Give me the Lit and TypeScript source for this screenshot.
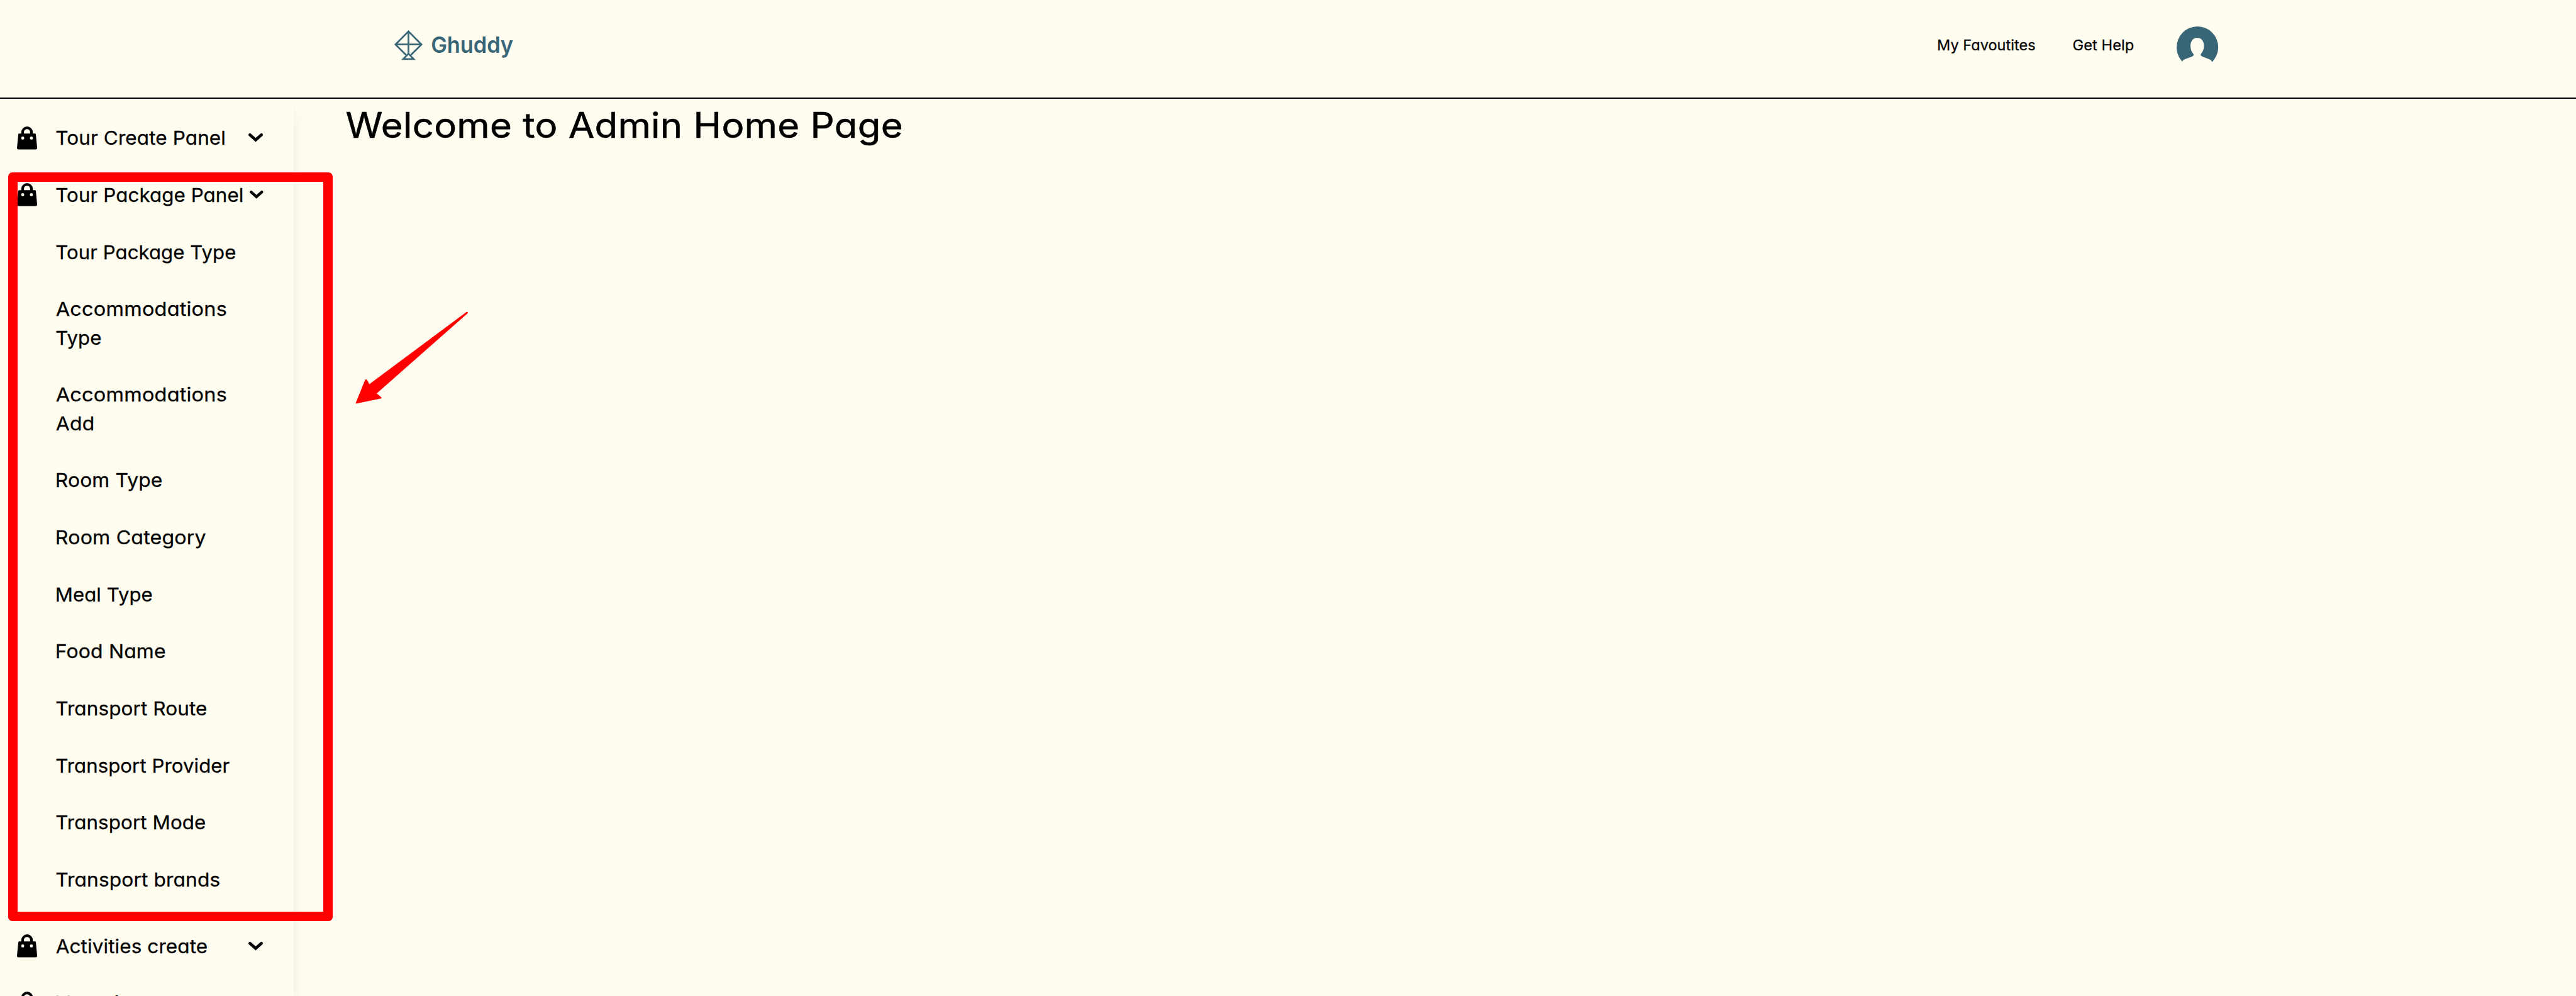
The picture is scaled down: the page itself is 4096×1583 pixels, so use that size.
import { LitElement, html, css } from "lit";
import { customElement, property } from "lit/decorators.js";

/** Width of the design canvas; every --u is one unit of it. */
const DESIGN_WIDTH = 4336;
/** Share of the missing width that goes to the glyphs; the rest is tracking. */
const STRETCH_SHARE = 0.9;

/** One line of text, widened so that its ink spans a given width in design units. */
@customElement("fit-label")
class FitLabel extends LitElement {
  @property() text = "";
  @property({ type: Number }) span = 0;

  static styles = css`
    :host { display: block; white-space: nowrap; }
    .line { display: inline-block; transform-origin: 0 50%; }
  `;

  render() {
    return html`<span class="line">${this.text}</span>`;
  }

  updated() {
    const line = this.renderRoot.querySelector(".line") as HTMLElement;
    const unit = window.innerWidth / DESIGN_WIDTH;
    const target = this.span * unit;
    const cs = getComputedStyle(line);
    const ctx = document.createElement("canvas").getContext("2d")!;
    const size = parseFloat(cs.fontSize);
    const k = size / 1000;
    ctx.font = `${cs.fontWeight} 1000px ${cs.fontFamily}`;
    const first = ctx.measureText(this.text[0]);
    const last = ctx.measureText(this.text[this.text.length - 1]);
    const left = -first.actualBoundingBoxLeft * k;
    const right = (last.width - last.actualBoundingBoxRight) * k;
    const ink = line.offsetWidth - left - right;
    const scale = 1 + (target / ink - 1) * STRETCH_SHARE;
    const spacing = (target / scale - ink) / (this.text.length - 1);
    const shift = -left * 0.5 - 1.1 * unit;
    line.style.letterSpacing = `${spacing}px`;
    line.style.transform = `translate(${shift}px, ${0.65 * unit}px) scaleX(${scale})`;
    this.style.width = `${target}px`;
  }
}

type Line = [text: string, span: number];

const packageItems: Line[][] = [
  [["Tour Package Type", 301.5]],
  [["Accommodations", 286.4], ["Type", 75]],
  [["Accommodations", 286.4], ["Add", 62.6]],
  [["Room Type", 176.8]],
  [["Room Category", 250.2]],
  [["Meal Type", 160.3]],
  [["Food Name", 182]],
  [["Transport Route", 252.5]],
  [["Transport Provider", 290.8]],
  [["Transport Mode", 250]],
  [["Transport brands", 274.3]],
];

const label = ([text, span]: Line) => html`<fit-label .text=${text} .span=${span}></fit-label>`;

const bag = () => html`<svg class="bag" viewBox="0 0 34 39">
  <path fill-rule="evenodd" d="M7.3 12V9.6a9.7 9.6 0 0 1 19.4 0V12H30.2Q31.6 12 31.8 13.4L34 36.4Q34.1 38.6 32 38.6H2Q-.1 38.6 0 36.4L2.2 13.4Q2.4 12 3.8 12ZM11.7 12H22.1V9.4a5.2 5 0 0 0-10.4 0ZM7.1 19.6a2.6 2.6 0 1 0 5.2 0a2.6 2.6 0 1 0-5.2 0ZM21.7 19.6a2.6 2.6 0 1 0 5.2 0a2.6 2.6 0 1 0-5.2 0Z" />
</svg>`;

const chevron = (tight = false) => html`<svg class="chevron ${tight ? "tight" : ""}" viewBox="0 0 24.4 14.4">
  <path d="M2.5 2.4L12.2 11L21.9 2.4" fill="none" stroke="#000" stroke-width="5" stroke-linecap="round" />
</svg>`;

@customElement("app-root")
class AppRoot extends LitElement {
  static styles = css`
    :host {
      --u: calc(100vw / 4336);
      --teal: #386677;
      position: relative;
      display: flex;
      flex-direction: column;
      height: 100vh;
      overflow: hidden;
      background: #fffdef;
      color: #000;
      font-family: Inter, "Open Sans", sans-serif;
      font-feature-settings: "cv11" 1;
      font-optical-sizing: none;
      font-weight: 400;
      font-size: calc(32 * var(--u));
      line-height: calc(48 * var(--u));
    }
    svg { display: block; flex: none; overflow: visible; }
    .header {
      flex: none;
      box-sizing: border-box;
      display: flex;
      align-items: flex-start;
      justify-content: space-between;
      height: calc(166 * var(--u));
      padding: calc(44 * var(--u)) calc(602.3 * var(--u)) 0 calc(664 * var(--u));
      border-bottom: 2px solid #000;
    }
    .brand {
      display: flex;
      gap: calc(16 * var(--u));
      padding-top: calc(7 * var(--u));
      color: var(--teal);
      font-size: calc(37.5 * var(--u));
      font-weight: 600;
    }
    .kite { width: calc(47.6 * var(--u)); height: calc(50 * var(--u)); }
    .nav {
      display: flex;
      align-items: flex-start;
      font-size: calc(23.6 * var(--u));
    }
    .nav fit-label { margin-top: calc(7 * var(--u)); }
    .favs { margin-right: calc(65 * var(--u)); }
    .help { margin-right: calc(72.6 * var(--u)); }
    .avatar { width: calc(70 * var(--u)); height: calc(70 * var(--u)); }
    .body { flex: 1; display: flex; min-height: 0; }
    .sidebar {
      flex: none;
      box-sizing: border-box;
      width: calc(494 * var(--u));
      padding-top: calc(18 * var(--u));
      box-shadow: 0 calc(20 * var(--u)) calc(30 * var(--u)) calc(-6 * var(--u)) rgba(0, 0, 0, 0.1),
        0 calc(8 * var(--u)) calc(12 * var(--u)) calc(-4 * var(--u)) rgba(0, 0, 0, 0.05);
    }
    .row {
      display: flex;
      align-items: center;
      height: calc(96 * var(--u));
      padding: 0 calc(51.5 * var(--u)) 0 calc(29 * var(--u));
    }
    .row.packed { padding-right: calc(50.7 * var(--u)); }
    .row fit-label { margin: 0 auto 0 calc(32 * var(--u)); }
    .bag { width: calc(34 * var(--u)); height: calc(39 * var(--u)); }
    .chevron { width: calc(24.4 * var(--u)); height: calc(14.4 * var(--u)); }
    .chevron.tight { width: calc(22.8 * var(--u)); height: calc(13.5 * var(--u)); }
    .sub { padding-bottom: calc(16 * var(--u)); }
    .sub-item { padding: calc(24 * var(--u)) 0 calc(24 * var(--u)) calc(95 * var(--u)); }
    .main { padding: calc(8 * var(--u)) 0 0 calc(89 * var(--u)); }
    .title {
      margin: 0;
      font-size: calc(59 * var(--u));
      line-height: calc(72 * var(--u));
      font-weight: 400;
      -webkit-text-stroke: calc(0.6 * var(--u)) #000;
    }
    .row fit-label, .sub fit-label, .nav fit-label { -webkit-text-stroke: calc(0.3 * var(--u)) #000; }
    .frame {
      position: absolute;
      left: calc(14 * var(--u));
      top: calc(290 * var(--u));
      box-sizing: border-box;
      width: calc(546 * var(--u));
      height: calc(1260 * var(--u));
      border: calc(16 * var(--u)) solid #f00;
      border-radius: calc(7 * var(--u));
    }
    .arrow {
      position: absolute;
      left: calc(598 * var(--u));
      top: calc(524 * var(--u));
      width: calc(190 * var(--u));
      height: calc(156 * var(--u));
    }
  `;

  render() {
    return html`
      <header class="header">
        <div class="brand">
          <svg class="kite" viewBox="0 0 47.6 50">
            <g fill="none" stroke="#386677" stroke-width="2.9">
              <path d="M19.6 41.6L1.9 24L23.8 2L45.7 24L28 41.6" />
              <path d="M1.5 24H46M23.8 2V39" />
              <path d="M23.8 39.6L15 48.5H32.6Z" />
            </g>
          </svg>
          ${label(["Ghuddy", 136.3])}
        </div>
        <nav class="nav">
          <fit-label class="favs" .text=${"My Favoutites"} .span=${162.5}></fit-label>
          <fit-label class="help" .text=${"Get Help"} .span=${101.4}></fit-label>
          <svg class="avatar" viewBox="0 0 70 70">
            <path fill="#386677" d="M9.4 59C3.4 52.6 0 44.2 0 35a35 35 0 0 1 70 0C70 44.4 66.2 53 59.7 59.7C59 57.6 57.6 56.2 55.2 55.2L43.6 50.8Q40 49.2 40.4 46.8C44 43 46 38.4 46 33.2C46 25 42 19 34.7 19S23.3 25 23.3 33.2C23.3 38.4 25 43 28.6 46.8Q29.2 49.2 25.6 50.8L13.6 55.2Q10.4 56.6 9.4 59Z" />
          </svg>
        </nav>
      </header>
      <div class="body">
        <aside class="sidebar">
          <div class="row">${bag()}${label(["Tour Create Panel", 282.4])}${chevron()}</div>
          <div class="row packed">${bag()}${label(["Tour Package Panel", 312.3])}${chevron(true)}</div>
          <div class="sub">
            ${packageItems.map((lines) => html`<div class="sub-item">${lines.map(label)}</div>`)}
          </div>
          <div class="row">${bag()}${label(["Activities create", 253.4])}${chevron()}</div>
          <div class="row">${bag()}${label(["Vacation", 146])}${chevron()}</div>
        </aside>
        <main class="main">
          <h1 class="title">${label(["Welcome to Admin Home Page", 934.3])}</h1>
        </main>
      </div>
      <div class="frame"></div>
      <svg class="arrow" viewBox="598 524 190 156">
        <path fill="#f00" stroke="#f00" stroke-width="1" stroke-linejoin="round" d="M599 678.6L615 639Q616.4 638 617.2 639L621.4 647L785.6 525Q787.6 525 786.6 527L633.4 662L641.4 668.6Q642 669.6 641 670Z" />
      </svg>
    `;
  }
}
